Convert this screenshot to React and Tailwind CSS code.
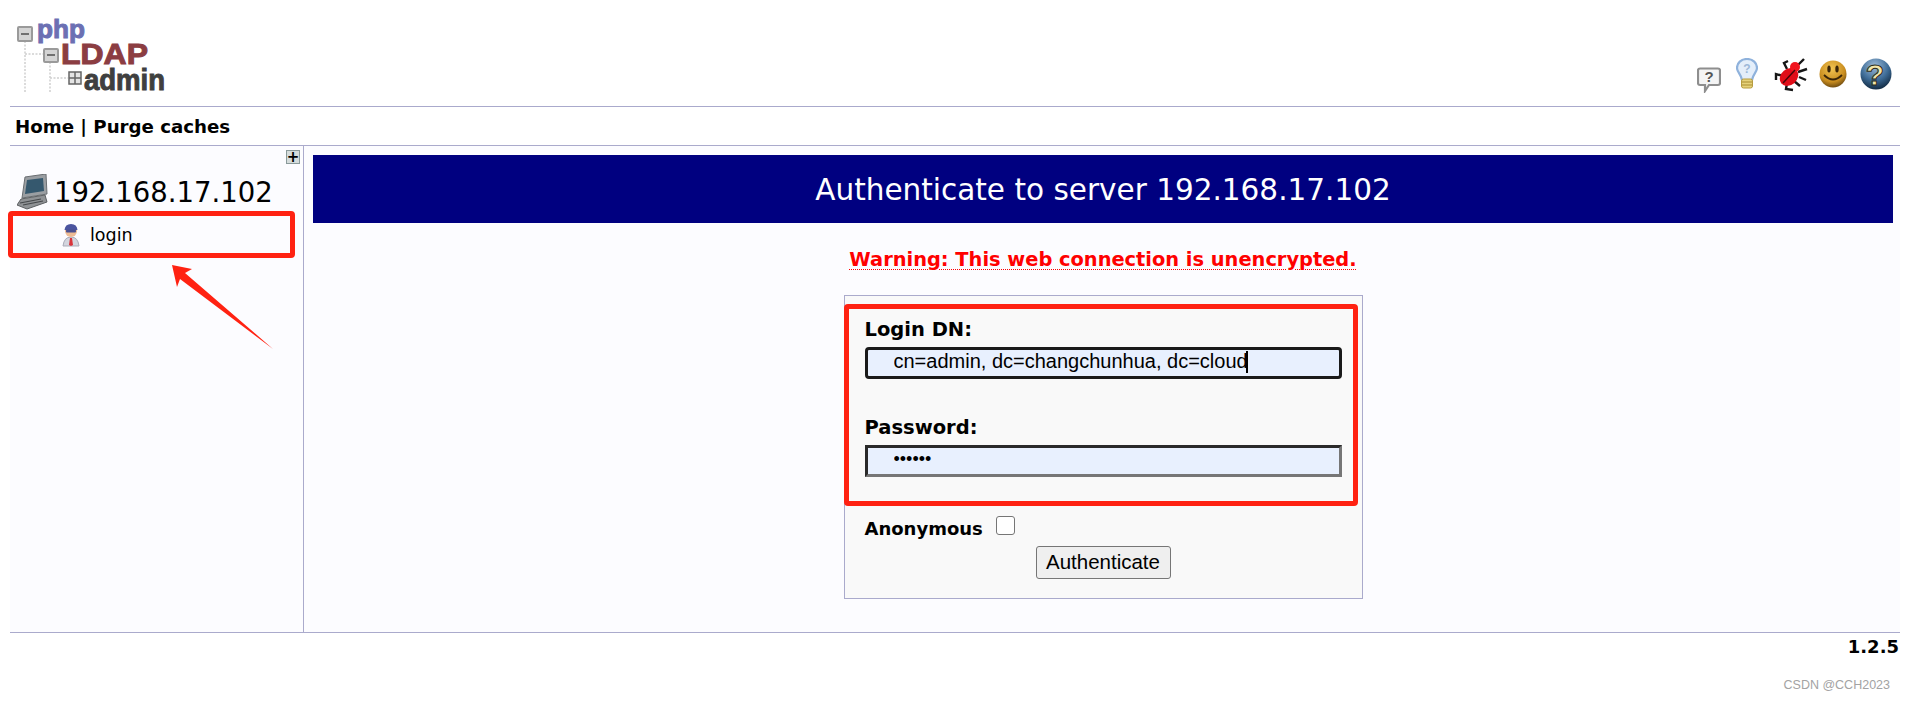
const Logo = () => (
  <svg width="150" height="94" viewBox="0 -14 150 94" className="block">
    <g stroke="#d0d0d0" strokeWidth="1.500" strokeDasharray="2 1.500" fill="none">
      <path d="M8 23V74" />
      <path d="M33 44V74" />
      <path d="M8 36H26" />
      <path d="M33 60H51" />
    </g>
    <rect x="1" y="9" width="14" height="14" rx="1" fill="#d4d4d4" stroke="#9a9a9a" strokeWidth="2" />
    <rect x="4" y="15" width="8" height="2" fill="#707070" />
    <rect x="27" y="31" width="14" height="13" rx="1" fill="#d4d4d4" stroke="#9a9a9a" strokeWidth="2" />
    <rect x="30" y="36" width="8" height="2" fill="#707070" />
    <rect x="52" y="54" width="12" height="12" fill="#e4e4e4" stroke="#666" strokeWidth="1.500" />
    <path d="M58 54V66M52 60H64" stroke="#666" strokeWidth="1.500" />
    <g fontFamily="'Liberation Sans', sans-serif" fontWeight="700" strokeWidth="1">
      <text x="20" y="20" fontSize="26" fill="#6b70b3" stroke="#6b70b3" textLength="48" lengthAdjust="spacingAndGlyphs">php</text>
      <text x="44" y="46" fontSize="29" fill="#8b3d42" stroke="#8b3d42" textLength="87" lengthAdjust="spacingAndGlyphs">LDAP</text>
      <text x="67" y="72" fontSize="30" fill="#3f3f3f" stroke="#3f3f3f" textLength="81" lengthAdjust="spacingAndGlyphs">admin</text>
    </g>
  </svg>
);

const BubbleIcon = () => (
  <svg width="24" height="26" viewBox="0 0 24 26">
    <path d="M3 1.500H21Q23 1.500 23 3.500V16Q23 18 21 18H12L8 24V18H3Q1 18 1 16V3.500Q1 1.500 3 1.500Z" fill="#f4f4f4" stroke="#8e8e8e" strokeWidth="2.200" />
    <text x="12" y="15" textAnchor="middle" fontFamily="'Liberation Sans', sans-serif" fontWeight="700" fontSize="15" fill="#555">?</text>
  </svg>
);

const BulbIcon = () => (
  <svg width="22" height="32" viewBox="0 0 22 32">
    <path d="M11 1C5 1 1 5 1 10C1 14 5 16 6 22H16C17 16 21 14 21 10C21 5 17 1 11 1Z" fill="#e4eefa" stroke="#8fb2dc" strokeWidth="2.200" />
    <text x="11" y="15" textAnchor="middle" fontFamily="'Liberation Sans', sans-serif" fontWeight="700" fontSize="12" fill="#9db8d8">?</text>
    <rect x="5.500" y="21" width="11" height="9" rx="2" fill="#e6d27a" stroke="#b79c3e" />
    <path d="M6 24H16M6 27H16" stroke="#a88c30" />
  </svg>
);

const BugIcon = () => (
  <svg width="34" height="34" viewBox="0 0 34 34">
    <g stroke="#161616" strokeWidth="2.400" fill="none">
      <path d="M13 11L10 5L14 3" />
      <path d="M21 10L30 1" />
      <path d="M24 14L33 11" />
      <path d="M9 18L2 16V22" />
      <path d="M25 19L32 22" />
      <path d="M13 25L12 31L19 32" />
      <path d="M20 23L26 28" />
    </g>
    <ellipse cx="15" cy="19" rx="10" ry="8" fill="#e00d18" transform="rotate(-40 15 19)" />
    <circle cx="21" cy="9" r="5" fill="#f0141e" />
    <path d="M9 25L21 12" stroke="#4a0508" strokeWidth="1.500" />
  </svg>
);

const SmileIcon = () => (
  <svg width="28" height="30" viewBox="0 0 28 30">
    <defs>
      <radialGradient id="smile" cx="45%" cy="30%" r="75%">
        <stop offset="0%" stopColor="#f2c452" />
        <stop offset="65%" stopColor="#c98d1f" />
        <stop offset="100%" stopColor="#5e3f0e" />
      </radialGradient>
    </defs>
    <circle cx="14" cy="14" r="13.500" fill="url(#smile)" />
    <ellipse cx="10" cy="9" rx="1.700" ry="3.500" fill="#3a2508" />
    <ellipse cx="18" cy="9" rx="1.700" ry="3.500" fill="#3a2508" />
    <path d="M5 15Q14 24 23 15" stroke="#3a2508" strokeWidth="1.800" fill="none" />
  </svg>
);

const HelpIcon = () => (
  <svg width="32" height="34" viewBox="0 0 32 34">
    <defs>
      <radialGradient id="help" cx="45%" cy="25%" r="80%">
        <stop offset="0%" stopColor="#9dbbd8" />
        <stop offset="55%" stopColor="#3f6d98" />
        <stop offset="100%" stopColor="#0c2238" />
      </radialGradient>
    </defs>
    <circle cx="16" cy="16" r="15.500" fill="url(#help)" />
    <text x="15" y="27" textAnchor="middle" fontFamily="'Liberation Sans', sans-serif" fontWeight="700" fontSize="30" fill="#f3e6a8" stroke="#2a2a18" strokeWidth="1">?</text>
  </svg>
);

const ServerIcon = () => (
  <svg width="31" height="36" viewBox="0 0 31 36" className="block">
    <path d="M8 3L29 0L30 20L5 24Z" fill="#9a9ea2" stroke="#6a6e72" />
    <path d="M10 6L26 4L27 17L8 20Z" fill="#35586e" />
    <path d="M4 25L28 21L30 28L10 35L0 31Z" fill="#8f9295" stroke="#5c5f62" />
    <path d="M3 29L24 25M6 31L26 27" stroke="#45484b" strokeWidth="1.200" />
  </svg>
);

const UserIcon = () => (
  <svg width="18" height="24" viewBox="0 0 18 24" className="block">
    <path d="M1 23Q2 14 9 14Q16 14 17 23Z" fill="#d3d5de" stroke="#a9abb8" />
    <path d="M8 15H10L11 22L9 23L7 22Z" fill="#d9333a" />
    <circle cx="9" cy="8" r="6" fill="#eebc95" />
    <path d="M2.500 7Q3 1 9 1Q15 1 15.500 7Z" fill="#4a549f" />
    <rect x="4" y="6.500" width="10" height="3" rx="1" fill="#4a5090" />
  </svg>
);

const RedBox = ({ className }) => (
  <div className={`absolute rounded-[4px] border-[5px] border-[#ff2212] ${className}`} />
);

const App = () => {
  return (
    <div className="relative h-[701px] w-full overflow-hidden bg-white pl-[10px] pr-[5px] font-['DejaVu_Sans',sans-serif] text-black">
      <header className="flex h-[107px] items-start justify-between border-b border-[#aaaacc] pl-[7px] pr-[8px]">
        <div className="pt-[4px]">
          <Logo />
        </div>
        <div className="flex items-start pt-[58px]">
          <div className="mr-[15px] mt-[9px]"><BubbleIcon /></div>
          <div className="mr-[16px]"><BulbIcon /></div>
          <div className="mr-[11px]"><BugIcon /></div>
          <div className="mr-[13px] mt-[2px]"><SmileIcon /></div>
          <HelpIcon />
        </div>
      </header>

      <nav className="flex h-[39px] items-center border-b border-[#aaaacc] pl-[5px] pt-[2px] text-[18.200px] font-bold">
        Home | Purge caches
      </nav>

      <div className="flex h-[487px] border-b border-[#aaaacc] bg-[#fcfcff]">
        <aside className="relative w-[294px] shrink-0 border-r border-[#aaaacc]">
          <div className="absolute right-[3px] top-[4px] flex h-[14px] w-[14px] items-center justify-center border border-[#8a9a9a] bg-[#d5dcdc] text-[15px] font-bold leading-none">
            +
          </div>
          <div className="flex items-center pl-[7px] pt-[28px]">
            <ServerIcon />
            <span className="ml-[6px] text-[27.500px] leading-[36px]">192.168.17.102</span>
          </div>
          <div className="mt-[13px] flex items-center pl-[52px]">
            <UserIcon />
            <span className="ml-[10px] text-[17.500px] leading-[24px]">login</span>
          </div>
        </aside>

        <main className="flex min-w-0 flex-1 flex-col items-center pl-[9px] pr-[7px] pt-[9px]">
          <div className="flex h-[68px] w-full items-center justify-center bg-[#000080] pt-[2px] text-[29.500px] text-white">
            Authenticate to server 192.168.17.102
          </div>
          <p className="mt-[24px] text-[19.400px] font-bold leading-[26px] text-[#ff0000] underline decoration-[#ff0000] decoration-dotted decoration-1 underline-offset-[3px]">
            Warning: This web connection is unencrypted.
          </p>
          <form className="mt-[22px] flex h-[304px] w-[519px] flex-col border border-[#aaaacc] bg-[#f9f9f9] pl-[20px] pr-[20px] pt-[23px]">
            <label className="text-[19.500px] font-bold leading-[22px]">Login DN:</label>
            <div className="relative mt-[6px]">
              <input
                readOnly
                value="cn=admin, dc=changchunhua, dc=cloud"
                className="block h-[32px] w-[477px] rounded-[4px] border-[3px] border-[#1a1a1a] bg-[#e8f0fe] pb-[3px] pl-[26px] font-['Liberation_Sans',sans-serif] text-[20px] text-black outline-none"
              />
              <div className="absolute left-[381px] top-[4px] h-[22px] w-[2px] bg-black" />
            </div>
            <label className="mt-[38px] text-[19.500px] font-bold leading-[22px]">Password:</label>
            <input
              readOnly
              type="password"
              value="123456"
              className="mt-[6px] block h-[32px] w-[477px] border-[3px] border-b-[#767676] border-l-[#2a2a2a] border-r-[#767676] border-t-[#2a2a2a] bg-[#e8f0fe] pb-[3px] pl-[26px] font-['Liberation_Sans',sans-serif] text-[18px] text-black outline-none"
            />
            <div className="mt-[39px] flex items-start">
              <span className="pt-[2px] text-[18px] font-bold leading-[22px]">Anonymous</span>
              <input type="checkbox" className="ml-[13px] h-[19px] w-[19px] appearance-none rounded-[3px] border border-[#767676] bg-white" />
            </div>
            <button type="button" className="mt-[6px] h-[33px] w-[135px] self-center rounded-[3px] border border-[#767676] bg-[#efefef] pb-[2px] font-['Liberation_Sans',sans-serif] text-[20.500px] text-black">
              Authenticate
            </button>
          </form>
        </main>
      </div>

      <div className="pr-[1px] pt-[1px] text-right text-[18px] font-bold leading-[26px]">1.2.5</div>
      <div className="absolute bottom-[8px] right-[15px] font-['Liberation_Sans',sans-serif] text-[12.500px] leading-[15px] text-[#a3a3a3]">
        CSDN @CCH2023
      </div>

      {/* annotations drawn on top of the screenshot */}
      <RedBox className="left-[8px] top-[211px] h-[47px] w-[287px]" />
      <RedBox className="left-[844px] top-[304px] h-[202px] w-[514px]" />
      <svg className="absolute left-[165px] top-[260px]" width="112" height="92" viewBox="0 0 112 92">
        <path d="M7 5L27 9L20 13L108 89L15 19L12 27Z" fill="#ff2212" />
      </svg>
    </div>
  );
};

export default App;
